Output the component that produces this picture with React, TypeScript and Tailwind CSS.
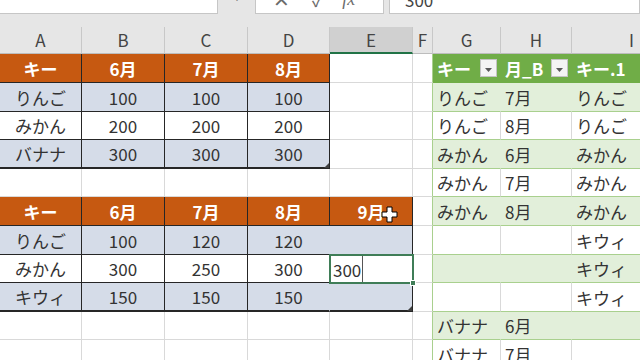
import React from "react";

type Kind = "blank" | "oh" | "bd" | "wd" | "gh" | "gb" | "gw";

interface Cell {
  k: Kind;
  v?: string;
  last?: boolean; // table bottom edge
  openR?: boolean; // no line on the right
  darkB?: boolean; // dark bottom line (top edge of a table below)
  greenR?: boolean; // green line on the right (left edge of green table)
}

const COLS = [82, 83, 83, 82, 83, 20, 68, 71, 120];
const LETTERS = ["A", "B", "C", "D", "E", "F", "G", "H", "I"];
const HEIGHTS = [29, 29, 28, 29, 28, 29, 29, 28, 29, 28, 29];

const b = (v?: string): Cell => ({ k: "blank", v });
const f: Cell = { k: "blank", greenR: true };

const ROWS: Cell[][] = [
  [
    { k: "oh", v: "キー" },
    { k: "oh", v: "6月" },
    { k: "oh", v: "7月" },
    { k: "oh", v: "8月" },
    b(),
    f,
    { k: "gh", v: "キー" },
    { k: "gh", v: "月_B" },
    { k: "gh", v: "キー.1" },
  ],
  [
    { k: "bd", v: "りんご" },
    { k: "bd", v: "100" },
    { k: "bd", v: "100" },
    { k: "bd", v: "100" },
    b(),
    f,
    { k: "gb", v: "りんご" },
    { k: "gb", v: "7月" },
    { k: "gb", v: "りんご" },
  ],
  [
    { k: "wd", v: "みかん" },
    { k: "wd", v: "200" },
    { k: "wd", v: "200" },
    { k: "wd", v: "200" },
    b(),
    f,
    { k: "gw", v: "りんご" },
    { k: "gw", v: "8月" },
    { k: "gw", v: "りんご" },
  ],
  [
    { k: "bd", v: "バナナ", last: true },
    { k: "bd", v: "300", last: true },
    { k: "bd", v: "300", last: true },
    { k: "bd", v: "300", last: true },
    b(),
    f,
    { k: "gb", v: "みかん" },
    { k: "gb", v: "6月" },
    { k: "gb", v: "みかん" },
  ],
  [
    { k: "blank", darkB: true },
    { k: "blank", darkB: true },
    { k: "blank", darkB: true },
    { k: "blank", darkB: true },
    { k: "blank", darkB: true },
    f,
    { k: "gw", v: "みかん" },
    { k: "gw", v: "7月" },
    { k: "gw", v: "みかん" },
  ],
  [
    { k: "oh", v: "キー" },
    { k: "oh", v: "6月" },
    { k: "oh", v: "7月" },
    { k: "oh", v: "8月" },
    { k: "oh", v: "9月" },
    f,
    { k: "gb", v: "みかん" },
    { k: "gb", v: "8月" },
    { k: "gb", v: "みかん" },
  ],
  [
    { k: "bd", v: "りんご" },
    { k: "bd", v: "100" },
    { k: "bd", v: "120" },
    { k: "bd", v: "120", openR: true },
    { k: "bd" },
    f,
    { k: "gw" },
    { k: "gw" },
    { k: "gw", v: "キウィ" },
  ],
  [
    { k: "wd", v: "みかん" },
    { k: "wd", v: "300" },
    { k: "wd", v: "250" },
    { k: "wd", v: "300" },
    { k: "wd" },
    f,
    { k: "gb" },
    { k: "gb" },
    { k: "gb", v: "キウィ" },
  ],
  [
    { k: "bd", v: "キウィ", last: true },
    { k: "bd", v: "150", last: true },
    { k: "bd", v: "150", last: true },
    { k: "bd", v: "150", last: true, openR: true },
    { k: "bd", last: true },
    f,
    { k: "gw" },
    { k: "gw" },
    { k: "gw", v: "キウィ" },
  ],
  [b(), b(), b(), b(), b(), f, { k: "gb", v: "バナナ" }, { k: "gb", v: "6月" }, { k: "gb" }],
  [b(), b(), b(), b(), b(), f, { k: "gw", v: "バナナ" }, { k: "gw", v: "7月" }, { k: "gw" }],
];

function cellClass(c: Cell) {
  let cls = "flex shrink-0 items-center border-r border-b ";
  switch (c.k) {
    case "blank":
      cls += "bg-white border-b-[#d9d9d9] ";
      cls += c.greenR ? "border-r-[#a9d08e] " : "border-r-[#d9d9d9] ";
      if (c.darkB) cls += "border-b-[#262626] ";
      break;
    case "oh":
      cls += "justify-center bg-[#c65911] font-bold text-white border-r-[#262626] border-b-[#262626] ";
      break;
    case "bd":
      cls += "justify-center bg-[#d5dce8] text-[#333] border-b-[#262626] ";
      cls += c.openR ? "border-r-[#d5dce8] " : "border-r-[#262626] ";
      break;
    case "wd":
      cls += "justify-center bg-white text-[#333] border-r-[#262626] border-b-[#262626] ";
      break;
    case "gh":
      cls += "justify-between bg-[#70ad47] pl-[4px] pr-[3px] font-bold text-white border-r-[#70ad47] border-b-[#70ad47] ";
      break;
    case "gb":
      cls += "bg-[#e2efda] pl-[4px] text-[#333] border-r-[#e2efda] border-b-[#a9d08e] ";
      break;
    case "gw":
      cls += "bg-white pl-[4px] text-[#333] border-r-[#d9d9d9] border-b-[#a9d08e] ";
      break;
  }
  if (c.last) cls += "border-b-2 border-b-[#7f7f7f] ";
  return cls;
}

function Dropdown() {
  return (
    <span className="flex h-[18px] w-[17px] shrink-0 items-end justify-center border border-[#c4c4c4] bg-[#f4f4f4] pb-[4px]">
      <svg width="7" height="4" viewBox="0 0 7 4">
        <path d="M0 0h7L3.5 4z" fill="#595959" />
      </svg>
    </span>
  );
}

function PlusCursor() {
  return (
    <svg width="17" height="17" viewBox="0 0 17 17">
      <path
        d="M6 1h5v5h5v5h-5v5H6v-5H1V6h5z"
        fill="#fff"
        stroke="#000"
        strokeWidth="1"
      />
    </svg>
  );
}

function FormulaBar() {
  return (
    <div className="flex h-[14px] items-end overflow-hidden bg-[#e6e6e6]">
      <div className="h-[30px] w-[218px] shrink-0 border-r border-b border-[#c6c6c6] bg-white" />
      <div className="flex h-[30px] w-[37px] shrink-0 items-center justify-center text-[#8a8a8a]">
        <span className="mt-[-10px] text-[12px] leading-none">⋮</span>
      </div>
      <div className="flex h-[30px] w-[129px] shrink-0 items-center border border-[#c6c6c6] bg-white text-[#6b6b6b]">
        <span className="ml-[17px] text-[20px] leading-none">✕</span>
        <span className="ml-[22px] text-[18px] leading-none">✓</span>
        <span className="ml-[18px] font-['Liberation_Serif',serif] text-[18px] italic leading-none">fx</span>
      </div>
      <div className="w-[5px] shrink-0" />
      <div className="flex h-[30px] flex-1 items-center border border-[#c6c6c6] bg-white pl-[15px] text-[17px] text-[#444]">
        <span className="leading-none">300</span>
      </div>
    </div>
  );
}

export default function App() {
  return (
    <div className="h-[360px] w-[640px] overflow-hidden bg-[#e6e6e6] font-['Noto_Sans_CJK_JP','Noto_Sans',sans-serif] text-[17px]">
      <FormulaBar />
      <div className="h-[13px]" />
      <div className="flex h-[27px]">
        {COLS.map((w, i) => (
          <div
            key={i}
            style={{ width: w }}
            className={
              i === 4
                ? "flex shrink-0 items-center justify-center border-r border-b-2 border-r-[#c8c8c8] border-b-[#217346] bg-[#d0d0d0] text-[#444]"
                : "flex shrink-0 items-center justify-center border-r border-b border-r-[#c8c8c8] border-b-[#bdbdbd] text-[#444]"
            }
          >
            {LETTERS[i]}
          </div>
        ))}
      </div>
      <div className="relative">
        {ROWS.map((row, ri) => (
          <div key={ri} className="flex" style={{ height: HEIGHTS[ri] }}>
            {row.map((c, ci) => (
              <div key={ci} style={{ width: COLS[ci] }} className={cellClass(c)}>
                <span className="whitespace-nowrap leading-none">{c.v}</span>
                {c.k === "gh" && <Dropdown />}
              </div>
            ))}
          </div>
        ))}

        {/* active cell E8 while editing */}
        <div className="absolute left-[329px] top-[200px] h-[30px] w-[85px] border-2 border-[#3f7d57]">
          <span className="absolute left-[2px] top-[5px] leading-none text-[#333]">300</span>
          <span className="absolute left-[31px] top-0 h-[26px] w-px bg-[#555]" />
          <span className="absolute -bottom-[4px] -right-[4px] h-[6px] w-[6px] border border-white bg-[#3f7d57]" />
        </div>

        {/* table resize handles */}
        <svg className="absolute left-[324px] top-[109px]" width="5" height="5" viewBox="0 0 5 5">
          <path d="M5 0v5H0z" fill="#404040" />
        </svg>
        <svg className="absolute left-[407px] top-[252px]" width="5" height="5" viewBox="0 0 5 5">
          <path d="M5 0v5H0z" fill="#404040" />
        </svg>

        {/* mouse cursor */}
        <div className="absolute left-[381px] top-[152px]">
          <PlusCursor />
        </div>
      </div>
    </div>
  );
}
